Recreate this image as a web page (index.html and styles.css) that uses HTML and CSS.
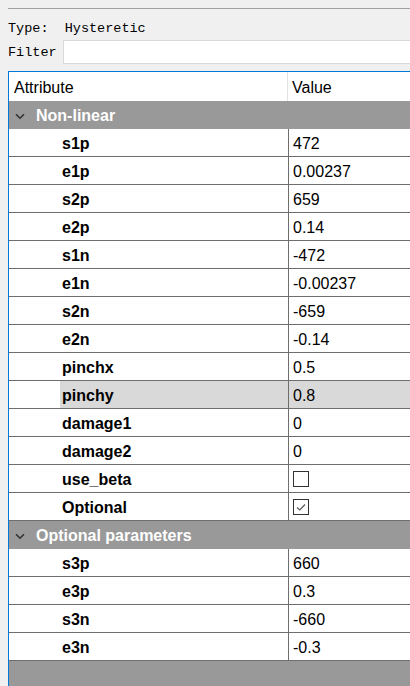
FILE: index.html
```html
<!DOCTYPE html>
<html lang="en">
<head>
    <meta charset="UTF-8">
    <title>Material</title>
    <link rel="stylesheet" href="styles.css">
</head>
<body>
    <div class="rule"></div>
    <div class="type-line">Type:&nbsp; Hysteretic</div>
    <div class="filter-row">
        <label for="filter">Filter</label>
        <input type="text" id="filter">
    </div>

    <div class="tree" id="tree">
        <div class="head">
            <div class="head-attr">Attribute</div>
            <div class="head-value">Value</div>
        </div>
    </div>

    <script src="tree.js"></script>
</body>
</html>
```

FILE: styles.css
```css
body {
    margin: 0;
    background-color: #f0f0f0;
    font-family: "Liberation Sans", Arial, sans-serif;
    overflow: hidden;
}
.rule {
    margin: 8px 0 0 8px;
    height: 1px;
    background-color: #a0a0a0;
}
.type-line {
    margin: 11px 0 0 8px;
    height: 17px;
    font-family: "Liberation Mono", "Courier New", monospace;
    font-size: 13.5px;
    line-height: 17px;
    color: #000;
}
.filter-row {
    display: flex;
    align-items: center;
    margin: 3px 0 0 8px;
    height: 24px;
}
.filter-row label {
    width: 55px;
    font-family: "Liberation Mono", "Courier New", monospace;
    font-size: 13.5px;
}
.filter-row input {
    flex: 1;
    height: 22px;
    margin: 0;
    padding: 0 3px;
    border: 1px solid #d9d9d9;
    border-right: none;
    background-color: #fff;
    outline: none;
}
.tree {
    margin: 7px 0 0 8px;
    border-top: 1px solid #0078d7;
    border-left: 1px solid #0078d7;
    background-color: #999;
    height: 615px;
    font-size: 16px;
    color: #000;
}
.head {
    display: grid;
    grid-template-columns: 279px 1fr;
    height: 29px;
    background-color: #fff;
}
.head-attr {
    padding: 7px 0 0 5px;
    border-right: 1px solid #e3e3e3;
}
.head-value {
    padding: 7px 0 0 4px;
}
.group {
    display: flex;
    align-items: center;
    box-sizing: border-box;
    height: 28px;
    padding-top: 2px;
    background-color: #999;
    color: #fff;
    font-weight: bold;
}
.group svg {
    margin: 0 11px 0 6px;
}
.row {
    display: grid;
    grid-template-columns: 51px 229px 1fr;
    height: 27px;
    background-color: #fff;
    border-bottom: 1px solid #6e6e6e;
}
.row .key {
    padding: 6px 0 0 2px;
    font-weight: bold;
    border-right: 1px solid #6e6e6e;
}
.row .val {
    padding: 6px 0 0 4px;
}
.row.current .key,
.row.current .val {
    background-color: #d9d9d9;
}
.check {
    display: block;
    width: 14px;
    height: 14px;
    margin-top: 0;
    border: 1px solid #333;
    background-color: #fff;
}
```

FILE: tree.js
```js
// parameter groups of the Hysteretic material
const groups = [
    {
        name: 'Non-linear',
        rows: [
            ['s1p', '472'], ['e1p', '0.00237'], ['s2p', '659'], ['e2p', '0.14'],
            ['s1n', '-472'], ['e1n', '-0.00237'], ['s2n', '-659'], ['e2n', '-0.14'],
            ['pinchx', '0.5'], ['pinchy', '0.8'], ['damage1', '0'], ['damage2', '0'],
            ['use_beta', false], ['Optional', true]
        ]
    },
    {
        name: 'Optional parameters',
        rows: [['s3p', '660'], ['e3p', '0.3'], ['s3n', '-660'], ['e3n', '-0.3']]
    }
];

const tree = document.getElementById('tree');
const chevron = '<svg width="10" height="7" viewBox="0 0 10 7"><path d="M1 1.2 L5 5.2 L9 1.2" fill="none" stroke="#333" stroke-width="1.6"/></svg>';
const tick = '<svg width="14" height="14" viewBox="0 0 14 14"><path d="M3 7.5 L5.8 10 L11 4.5" fill="none" stroke="#555" stroke-width="1.1"/></svg>';

groups.forEach(group => {
    const head = document.createElement('div');
    head.className = 'group';
    head.innerHTML = chevron + '<span>' + group.name + '</span>';
    tree.appendChild(head);

    group.rows.forEach(([key, value]) => {
        const row = document.createElement('div');
        row.className = 'row' + (key === 'pinchy' ? ' current' : '');
        let cell = value;
        if (typeof value === 'boolean') {
            cell = '<span class="check">' + (value ? tick : '') + '</span>';
        }
        row.innerHTML = `<div></div><div class="key">${key}</div><div class="val">${cell}</div>`;
        tree.appendChild(row);
    });
});
```
